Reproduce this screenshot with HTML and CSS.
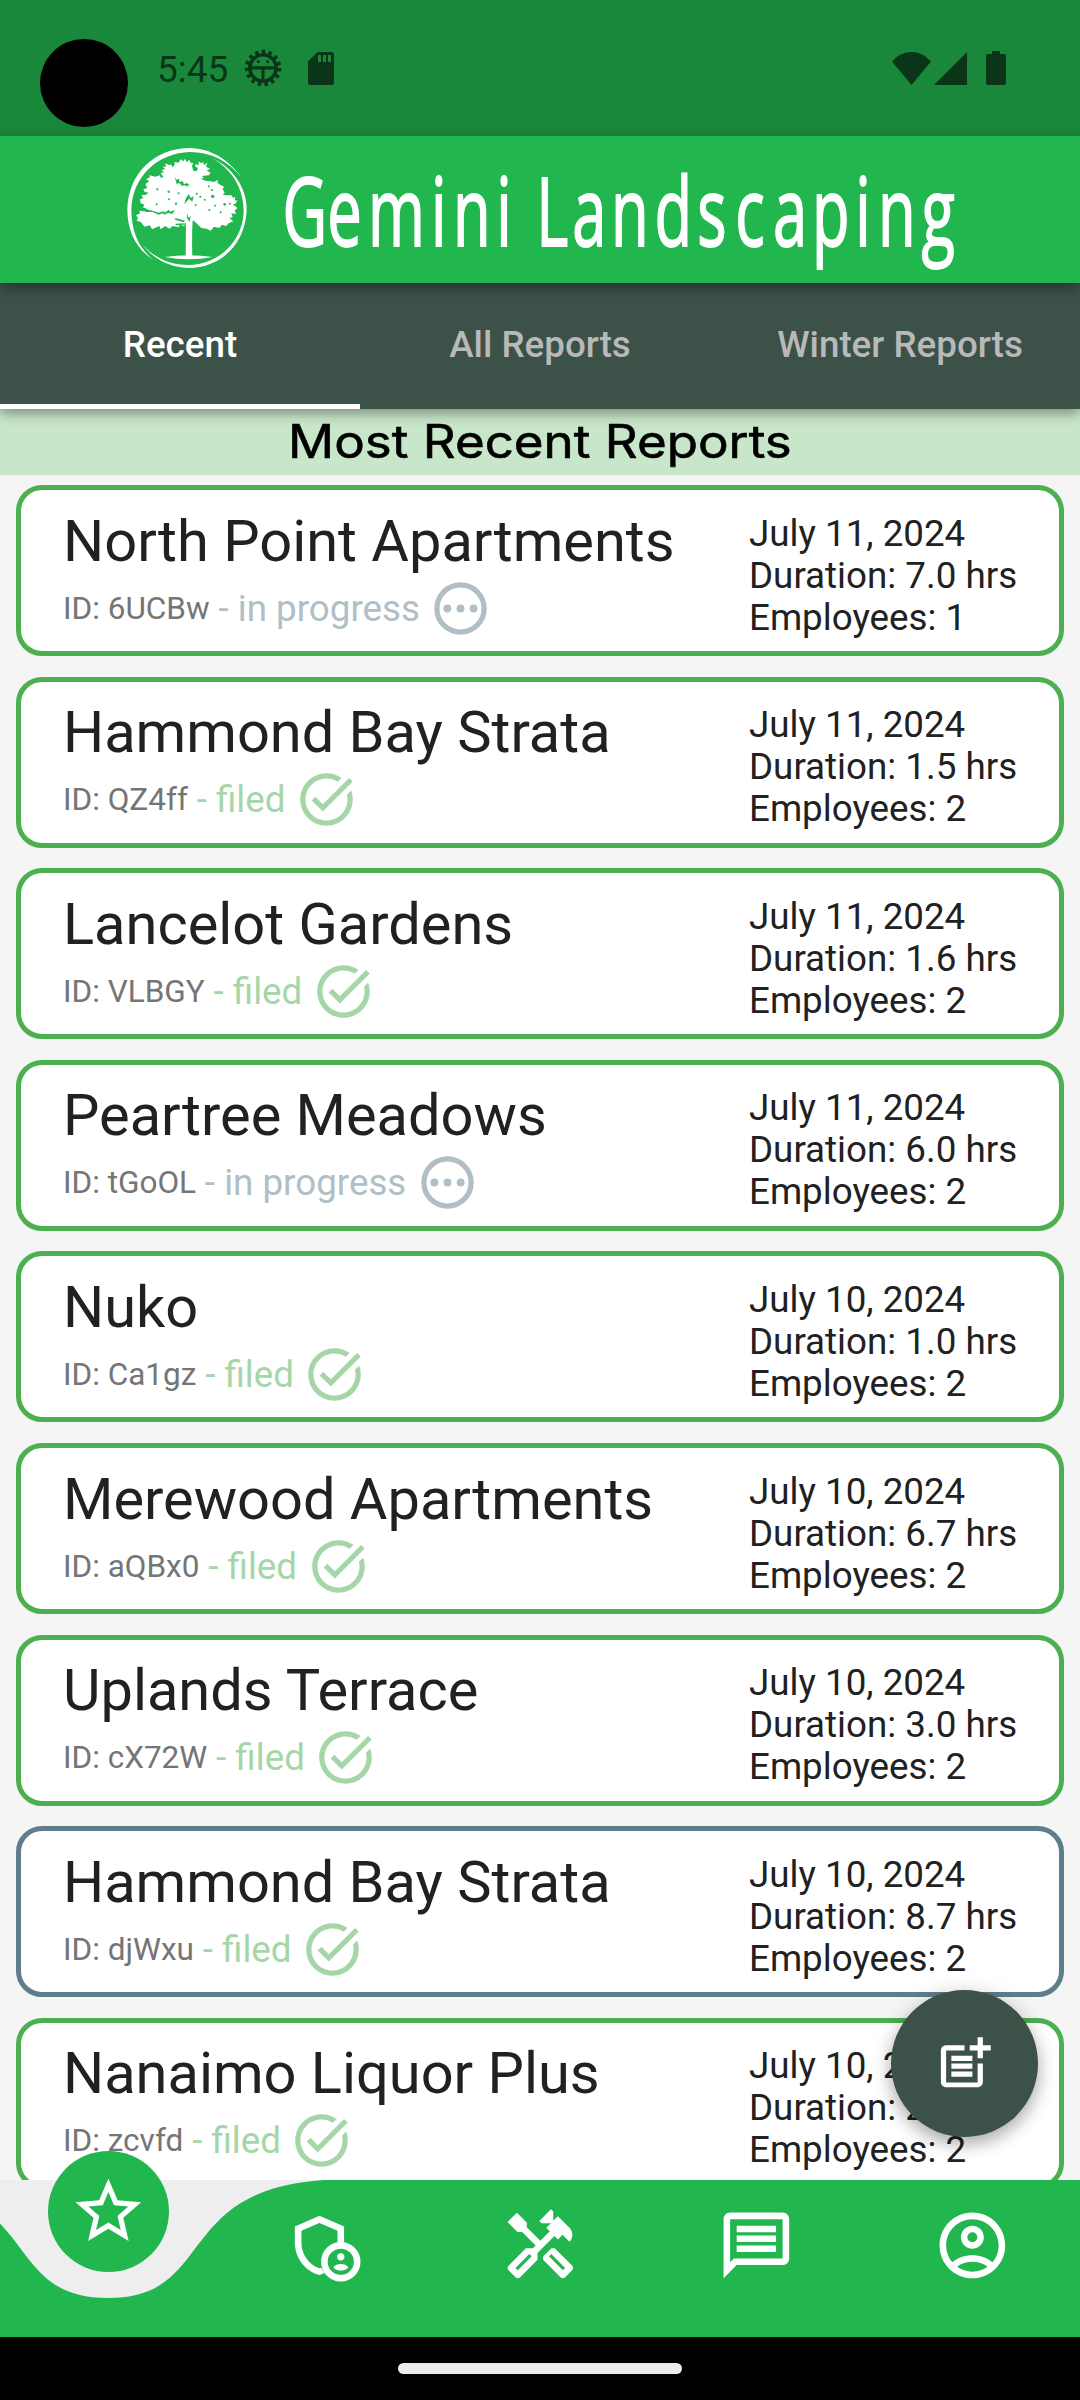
FILE: index.html
```html
<!DOCTYPE html>
<html lang="en">
<head>
<meta charset="utf-8">
<title>Gemini Landscaping</title>
<link rel="stylesheet" href="styles.css">
</head>
<body>
<svg class="defs" width="0" height="0" aria-hidden="true">
  <symbol id="pending" viewBox="0 0 24 24"><circle cx="12" cy="12" r="9" fill="none" stroke="currentColor" stroke-width="2"/><circle cx="7" cy="12" r="1.5"/><circle cx="12" cy="12" r="1.5"/><circle cx="17" cy="12" r="1.5"/></symbol>
  <symbol id="done" viewBox="0 0 24 24"><path d="M22 5.18L10.59 16.6l-4.24-4.24 1.41-1.41 2.83 2.83 10-10L22 5.18zM19.79 10.22c.13.57.21 1.17.21 1.78 0 4.42-3.58 8-8 8s-8-3.58-8-8 3.58-8 8-8c1.58 0 3.04.46 4.28 1.25l1.44-1.44C16.1 2.67 14.13 2 12 2 6.48 2 2 6.48 2 12s4.48 10 10 10 10-4.48 10-10c0-1.19-.22-2.33-.6-3.39l-1.61 1.61z"/></symbol>
</svg>
<div class="screen">
  <div class="statusbar">
    <span class="camera"></span>
    <span class="clock">5:45</span>
    <svg class="bug" viewBox="0 0 38 38"><circle cx="19" cy="19" r="13.200" fill="none" stroke="currentColor" stroke-width="3.600"/><circle cx="19" cy="19" r="16.300" fill="none" stroke="currentColor" stroke-width="4" stroke-dasharray="3.400 3.427"/><path d="M6 17.200h26v3.200H20.500V32h-3V20.400H6z"/><circle cx="14.300" cy="12.600" r="1.600"/><circle cx="23.700" cy="12.600" r="1.600"/></svg>
    <svg class="sd" viewBox="0 0 26 33"><path fill-rule="evenodd" d="M9.500 0H24a2 2 0 0 1 2 2v29a2 2 0 0 1-2 2H2a2 2 0 0 1-2-2V9.500zM10 3v7h3V3zM15 3v7h3V3zM20 3v7h3V3z"/></svg>
    <span class="grow"></span>
    <svg class="wifi" viewBox="0 0 39 33"><path d="M0 9.500Q8 0 19.500 0T39 9.500L19.500 33z"/></svg>
    <svg class="cell" viewBox="0 0 33 33"><path d="M33 0v33H0z"/></svg>
    <svg class="battery" viewBox="0 0 20 34"><path d="M6 0h8v3h4a2 2 0 0 1 2 2v27a2 2 0 0 1-2 2H2a2 2 0 0 1-2-2V5a2 2 0 0 1 2-2h4z"/></svg>
  </div>
  <header class="brand">
    <svg class="brand-art" viewBox="0 136 1080 147">
      <g transform="translate(110 136) scale(.33333)">
        <path fill="#fff" fill-rule="evenodd" d="M52 222C54 112 134 36 240 36C304 39 350 66 396 125C352 74 305 49 240 48C144 50 66 122 64 222C65 290 86 334 130 372C76 336 53 285 52 222zM306 66C372 96 412 160 410 224C405 326 330 396 236 396C180 394 130 370 98 326C134 366 180 387 236 387C324 386 399 318 401 224C400 156 366 100 306 66z"/>
        <path fill="#fff" d="M164 363Q236 352 308 363Q236 376 164 363zM228 250h20q-3 50-1 112h-20z"/>
        <path fill="#fff" transform="translate(60 48)" d="M165 20L170 30 178 24 183 34 190 32 186 42 190 56 200 58 204 48 196 44 196 36 206 40 206 28 214 34 220 30 222 40 232 32 228 44 240 50 230 56 242 62 236 70 216 72 222 78 212 80 226 86 240 88 252 90 264 84 262 92 270 98 282 104 278 112 284 122 278 128 290 130 304 130 310 138 316 134 314 146 322 144 316 156 308 156 322 168 314 176 318 186 304 184 308 196 298 198 310 208 296 214 288 222 276 218 268 228 252 224 242 236 230 230 214 228 198 212 188 204 184 216 178 206 168 206 172 218 158 222 150 214 146 226 128 222 118 230 106 222 92 232 88 222 66 232 60 220 44 224 32 210 20 206 24 198 18 190 30 184 28 176 44 178 54 172 38 166 44 158 32 154 30 142 40 138 34 130 48 128 56 122 44 120 40 112 52 108 46 96 58 88 48 82 60 76 58 70 76 74 90 70 92 78 100 74 92 64 102 60 94 54 106 52 98 44 108 44 106 34 118 40 122 36 128 46 134 38 134 30 146 32 152 22 160 28z"/>
        <g fill="#22b64f"><path d="M194 122l6 10 7-4 2 11 9-4 4 10 8-4 10 6-9 1 8 6-16-6-7 2-8-9-8 3zM106 220l22 4 18 6 17-5 0 6 13-9 5 5 14-5-8 12-12-4-11 6-6-4-12 4-18-8-22 0zM236 174l6 12 9-6-4 17-10-9-14 17 4-17zM197 246l28 8-4 5-26-8zM197 263l31-1 0 4-31 1zM232 232l4 14 6-6-3 18-8-12z"/>
        <circle cx="142" cy="160" r="3.500"/><circle cx="176" cy="167" r="3.500"/><circle cx="140" cy="205" r="3"/><circle cx="177" cy="190" r="3"/><circle cx="206" cy="172" r="3"/><circle cx="198" cy="203" r="3.500"/><circle cx="260" cy="173" r="3"/><circle cx="271" cy="182" r="3"/><circle cx="296" cy="151" r="3"/><circle cx="306" cy="162" r="3"/><circle cx="308" cy="181" r="5"/><circle cx="284" cy="191" r="3"/><circle cx="315" cy="209" r="3"/><circle cx="344" cy="205" r="4"/><circle cx="360" cy="203" r="3"/><circle cx="332" cy="229" r="3"/><circle cx="298" cy="222" r="3"/><circle cx="257" cy="207" r="3"/></g>
      </g>
      <g class="brand-text" transform="translate(0 245.500) scale(.64 1)">
        <text y="0" x="441.500 511.500 575 673.500 708 775.500">Gemini</text>
        <text y="0" x="838 894 954.700 1022.500 1089.500 1149 1207.800 1268.800 1336.200 1371.900 1440">Landscaping</text>
      </g>
    </svg>
  </header>
  <nav class="tabs">
    <a class="tab active">Recent</a>
    <a class="tab">All Reports</a>
    <a class="tab">Winter Reports</a>
  </nav>
  <h1 class="banner"><span>Most Recent Reports</span></h1>
  <main class="list">
    <article class="card"><div class="info"><h2>North Point Apartments</h2><p class="meta">ID: 6UCBw <span class="state open">- in progress<svg><use href="#pending"/></svg></span></p></div><p class="facts">July 11, 2024<br>Duration: 7.0 hrs<br>Employees: 1</p></article>
    <article class="card"><div class="info"><h2>Hammond Bay Strata</h2><p class="meta">ID: QZ4ff <span class="state">- filed<svg><use href="#done"/></svg></span></p></div><p class="facts">July 11, 2024<br>Duration: 1.5 hrs<br>Employees: 2</p></article>
    <article class="card"><div class="info"><h2>Lancelot Gardens</h2><p class="meta">ID: VLBGY <span class="state">- filed<svg><use href="#done"/></svg></span></p></div><p class="facts">July 11, 2024<br>Duration: 1.6 hrs<br>Employees: 2</p></article>
    <article class="card"><div class="info"><h2>Peartree Meadows</h2><p class="meta">ID: tGoOL <span class="state open">- in progress<svg><use href="#pending"/></svg></span></p></div><p class="facts">July 11, 2024<br>Duration: 6.0 hrs<br>Employees: 2</p></article>
    <article class="card"><div class="info"><h2>Nuko</h2><p class="meta">ID: Ca1gz <span class="state">- filed<svg><use href="#done"/></svg></span></p></div><p class="facts">July 10, 2024<br>Duration: 1.0 hrs<br>Employees: 2</p></article>
    <article class="card"><div class="info"><h2>Merewood Apartments</h2><p class="meta">ID: aQBx0 <span class="state">- filed<svg><use href="#done"/></svg></span></p></div><p class="facts">July 10, 2024<br>Duration: 6.7 hrs<br>Employees: 2</p></article>
    <article class="card"><div class="info"><h2>Uplands Terrace</h2><p class="meta">ID: cX72W <span class="state">- filed<svg><use href="#done"/></svg></span></p></div><p class="facts">July 10, 2024<br>Duration: 3.0 hrs<br>Employees: 2</p></article>
    <article class="card winter"><div class="info"><h2>Hammond Bay Strata</h2><p class="meta">ID: djWxu <span class="state">- filed<svg><use href="#done"/></svg></span></p></div><p class="facts">July 10, 2024<br>Duration: 8.7 hrs<br>Employees: 2</p></article>
    <article class="card"><div class="info"><h2>Nanaimo Liquor Plus</h2><p class="meta">ID: zcvfd <span class="state">- filed<svg><use href="#done"/></svg></span></p></div><p class="facts">July 10, 2024<br>Duration: 2.0 hrs<br>Employees: 2</p></article>
  </main>
  <button class="fab" aria-label="Add report"><svg viewBox="0 0 24 24"><path d="M17 19.220H5V7h7V5H5c-1.100 0-2 .9-2 2v12c0 1.100.9 2 2 2h12c1.100 0 2-.9 2-2v-7h-2v7.220zM19 2h-2v3h-3v2h3v3h2V7h3V5h-3V2zM7 9h8v2H7zM7 12h8v2H7zM7 15h8v2H7z"/></svg></button>
  <footer class="bottom">
    <svg class="bottom-shape" viewBox="0 0 1080 157"><path d="M-108 0C43.200 9.840 0 118 108 118C216 118 172.800 9.840 324 0H1080V158H-108z" fill="#22b64f"/></svg>
    <div class="items">
      <a class="item current"><svg viewBox="0 0 24 24"><path d="M22 9.240l-7.190-.62L12 2 9.190 8.630 2 9.240l5.460 4.730L5.820 21 12 17.270 18.180 21l-1.630-7.030L22 9.240zM12 15.400l-3.760 2.270 1-4.280-3.320-2.880 4.380-.38L12 6.100l1.710 4.040 4.380.38-3.320 2.880 1 4.280L12 15.400z"/></svg></a>
      <a class="item"><svg viewBox="0 0 24 24"><path d="M18 11.090V6.270L10.500 3 3 6.270v4.910c0 4.540 3.200 8.790 7.500 9.820.55-.13 1.080-.32 1.600-.55l-1.100-1.600-.5.140C7.300 17.900 5 14.700 5 11.180V7.580l5.500-2.400 5.500 2.400v3.600z"/><circle cx="17" cy="17" r="5" fill="none" stroke="currentColor" stroke-width="2"/><circle cx="17" cy="15.500" r="1.120"/><path d="M14.700 18.700C15.500 17.300 18.500 17.300 19.300 18.700C18.500 20.050 15.500 20.050 14.700 18.700z"/></svg></a>
      <a class="item"><svg viewBox="0 0 24 24"><path d="M21.670 18.170l-5.300-5.300h-.99l-2.540 2.540v.99l5.300 5.300c.39.39 1.020.39 1.410 0l2.120-2.120c.39-.38.39-1.020 0-1.410zm-2.830 1.420l-4.240-4.240.71-.71 4.240 4.240-.71.71z"/><path d="M17.340 10.190l1.410-1.410 2.120 2.120c1.170-1.170 1.170-3.070 0-4.240l-3.540-3.540-1.410 1.410V1.710L15.220 1l-3.540 3.540.71.71h2.830l-1.410 1.410 1.060 1.060-2.890 2.890-4.130-4.130V5.060L4.830 2.040 2 4.870 5.030 7.900h1.410l4.130 4.130-.85.85H7.600l-5.300 5.300c-.39.39-.39 1.020 0 1.410l2.120 2.120c.39.39 1.020.39 1.410 0l5.300-5.300v-2.120l5.150-5.150 1.060 1.050zm-7.980 5.150l-4.240 4.240-.71-.71 4.240-4.240.71.710z"/></svg></a>
      <a class="item"><svg viewBox="0 0 24 24"><path d="M4 4h16v12H5.170L4 17.170V4m0-2c-1.100 0-1.990.9-1.990 2L2 22l4-4h14c1.100 0 2-.9 2-2V4c0-1.100-.9-2-2-2H4zm2 10h12v2H6v-2zm0-3h12v2H6V9zm0-3h12v2H6V6z"/></svg></a>
      <a class="item"><svg viewBox="0 0 24 24"><path d="M12 2C6.480 2 2 6.480 2 12s4.480 10 10 10 10-4.480 10-10S17.520 2 12 2zM7.350 18.500C8.660 17.560 10.260 17 12 17s3.340.56 4.650 1.500C15.340 19.440 13.740 20 12 20s-3.340-.56-4.650-1.500zm10.790-1.380C16.450 15.800 14.320 15 12 15s-4.450.8-6.140 2.120C4.700 15.730 4 13.950 4 12c0-4.420 3.580-8 8-8s8 3.580 8 8c0 1.950-.7 3.730-1.860 5.120z"/><path d="M12 6c-1.930 0-3.500 1.570-3.500 3.500S10.070 13 12 13s3.500-1.570 3.500-3.500S13.930 6 12 6zm0 5c-.83 0-1.500-.67-1.500-1.500S11.170 8 12 8s1.500.67 1.500 1.500S12.830 11 12 11z"/></svg></a>
    </div>
  </footer>
  <div class="gesture"><span></span></div>
</div>
</body>
</html>
```
FILE: styles.css
```css
* { box-sizing: border-box; }
body { margin: 0; font-family: Roboto, sans-serif; }
h1, h2, p { margin: 0; font-weight: 400; }
svg { fill: currentColor; display: block; flex: none; }
.defs { position: absolute; }

.screen {
  position: relative;
  width: 1080px;
  height: 2400px;
  display: flex;
  flex-direction: column;
  overflow: hidden;
  background: #f5f5f5;
}

.statusbar {
  flex: none;
  height: 136px;
  display: flex;
  align-items: center;
  padding: 0 74px 0 40px;
  background: #1a883b;
  color: #0a3518;
}
.camera { width: 88px; height: 88px; margin-top: 30px; border-radius: 50%; background: #000; }
.clock { margin: 2px 0 0 29px; font-size: 37px; }
.bug { width: 38px; height: 38px; margin-left: 16px; }
.sd { width: 26px; height: 33px; margin-left: 26px; }
.grow { flex: 1; }
.wifi { width: 39px; height: 33px; }
.cell { width: 33px; height: 33px; margin-left: 3px; }
.battery { width: 20px; height: 34px; margin-left: 19px; }

.brand {
  position: relative;
  z-index: 3;
  flex: none;
  height: 147px;
  background: #22b64f;
  box-shadow: 0 4px 12px rgba(0, 0, 0, .4);
}
.brand-art { width: 1080px; height: 147px; }
.brand-text {
  font: 400 96px "Open Sans", sans-serif;
  fill: #fff;
  stroke: #fff;
  stroke-width: 1.8px;
}

.tabs {
  position: relative;
  z-index: 2;
  flex: none;
  display: flex;
  height: 126px;
  background: #3c5148;
  box-shadow: 0 4px 12px rgba(0, 0, 0, .4);
}
.tab {
  flex: 1;
  display: flex;
  align-items: center;
  justify-content: center;
  padding-top: 2px;
  border-bottom: 5px solid transparent;
  color: #b9b9b9;
  font-size: 36.75px;
  font-weight: 500;
}
.tab.active { color: #fff; border-color: #fff; }

.banner {
  flex: none;
  height: 65.5px;
  text-align: center;
  background: #c8e6c9;
  color: #000;
  font: 400 46px/64px Inter, sans-serif;
}
.banner span { display: inline-block; transform: scaleX(1.11); -webkit-text-stroke: .6px #000; }

.list {
  flex: 1;
  min-height: 0;
  display: flex;
  flex-direction: column;
  gap: 20.6px;
  padding: 10.500px 16px 0;
  overflow: hidden;
}
.card {
  flex: none;
  height: 171px;
  display: flex;
  justify-content: space-between;
  border: 5px solid #4caf50;
  border-radius: 26px;
  background: #fff;
  color: #212121;
  padding: 0 0 0 42px;
}
.card.winter { border-color: #607d8b; }
.info { padding-top: 16.700px; }
.info h2 { font-size: 57.75px; line-height: 68px; white-space: nowrap; }
.meta {
  display: flex;
  align-items: center;
  height: 63px;
  margin-top: 2px;
  color: #757575;
  font-size: 31.5px;
  white-space: pre;
}
.state { display: flex; align-items: center; margin-left: 1px; color: #a5d6a7; font-size: 36.75px; }
.state svg { width: 63px; height: 63px; margin-left: 9.500px; }
.state.open { color: #b0bec5; }
.facts { width: 310px; padding-top: 22.700px; font-size: 36.75px; line-height: 42px; }

.fab {
  position: absolute;
  left: 891px;
  top: 1990px;
  z-index: 4;
  width: 147px;
  height: 147px;
  display: grid;
  place-items: center;
  padding: 0;
  border: 0;
  border-radius: 50%;
  background: #3c5148;
  color: #fff;
  box-shadow: 0 8px 16px rgba(0, 0, 0, .25), 0 2px 24px rgba(0, 0, 0, .12);
}
.fab svg { width: 63px; height: 63px; }

.bottom { position: relative; flex: none; height: 157px; background: #eee; color: #fff; }
.bottom-shape { position: absolute; inset: 0; width: 1080px; height: 157px; }
.items { position: relative; display: flex; height: 132px; }
.item { flex: 1; display: grid; place-items: center; }
.item svg { width: 78.75px; height: 78.75px; }
.item.current {
  flex: none;
  width: 121px;
  height: 121px;
  margin: -29px 47.5px 0;
  border-radius: 50%;
  background: #22b64f;
}

.gesture { flex: none; height: 63.5px; display: grid; place-items: center; background: #000; }
.gesture span { width: 284px; height: 11px; margin-top: 1px; border-radius: 6px; background: #ebebeb; }
```
